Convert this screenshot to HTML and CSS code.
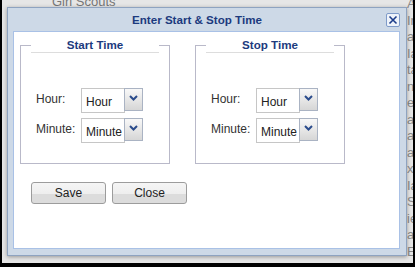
FILE: index.html
```html
<!DOCTYPE html>
<html lang="en">
<head>
    <meta charset="UTF-8">
    <meta name="viewport" content="width=device-width, initial-scale=1.0">
    <title>Enter Start &amp; Stop Time</title>
    <link rel="stylesheet" href="styles.css">
</head>
<body>
    <div class="screen">
        <div class="backdrop">
            <div class="bg-heading">Girl Scouts</div>
            <ul class="bg-list">
                <li>Ac</li><li>Ir</li><li>a</li><li>Ia</li><li>ta</li><li>n</li><li>e</li><li>a</li>
                <li>a</li><li>a:</li><li>x</li><li>Ia</li><li>SL</li><li>ie</li><li>a</li><li>En</li>
            </ul>
        </div>

        <div class="dialog">
            <div class="dialog-titlebar">
                <span class="dialog-title">Enter Start &amp; Stop Time</span>
                <button type="button" class="dialog-close" aria-label="Close">
                    <svg width="12" height="12" viewBox="0 0 12 12"><path d="M2.5 2.5 L9.5 9.5 M9.5 2.5 L2.5 9.5" stroke="#1d3d8a" stroke-width="1.6" fill="none"/></svg>
                </button>
            </div>
            <div class="dialog-body">
                <div class="time-groups">
                    <fieldset class="time-group">
                        <legend>Start Time</legend>
                        <div class="time-row">
                            <label>Hour:</label>
                            <div class="select">
                                <span class="select-value">Hour</span>
                                <span class="select-arrow"><svg width="9" height="6" viewBox="0 0 9 6"><path d="M1 1 L4.5 4.5 L8 1" stroke="#2b4c8c" stroke-width="2" fill="none"/></svg></span>
                            </div>
                        </div>
                        <div class="time-row">
                            <label>Minute:</label>
                            <div class="select">
                                <span class="select-value">Minute</span>
                                <span class="select-arrow"><svg width="9" height="6" viewBox="0 0 9 6"><path d="M1 1 L4.5 4.5 L8 1" stroke="#2b4c8c" stroke-width="2" fill="none"/></svg></span>
                            </div>
                        </div>
                    </fieldset>
                    <fieldset class="time-group">
                        <legend>Stop Time</legend>
                        <div class="time-row">
                            <label>Hour:</label>
                            <div class="select">
                                <span class="select-value">Hour</span>
                                <span class="select-arrow"><svg width="9" height="6" viewBox="0 0 9 6"><path d="M1 1 L4.5 4.5 L8 1" stroke="#2b4c8c" stroke-width="2" fill="none"/></svg></span>
                            </div>
                        </div>
                        <div class="time-row">
                            <label>Minute:</label>
                            <div class="select">
                                <span class="select-value">Minute</span>
                                <span class="select-arrow"><svg width="9" height="6" viewBox="0 0 9 6"><path d="M1 1 L4.5 4.5 L8 1" stroke="#2b4c8c" stroke-width="2" fill="none"/></svg></span>
                            </div>
                        </div>
                    </fieldset>
                </div>
                <div class="actions">
                    <button type="button" class="btn">Save</button>
                    <button type="button" class="btn">Close</button>
                </div>
            </div>
        </div>
    </div>
</body>
</html>
```

FILE: styles.css
```css
body {
    margin: 0;
    padding: 0;
    background-color: #000000;
    font-family: "Liberation Sans", Arial, sans-serif;
    font-size: 12px;
}

.screen {
    position: relative;
    width: 411px;
    height: 263px;
    margin-left: 2px;
    background-color: #e6e6e6;
    overflow: hidden;
}

/* page behind the modal */
.backdrop {
    display: flex;
    justify-content: space-between;
    color: #8a8a8a;
    font-size: 13px;
}

.bg-heading {
    margin-top: -6px;
    padding-left: 50px;
    color: #777777;
}

.bg-list {
    list-style: none;
    margin: -4px 0 0 0;
    padding: 0;
    width: 6px;
    overflow: hidden;
    white-space: nowrap;
    line-height: 16.5px;
}

/* modal */
.dialog {
    position: absolute;
    left: 5px;
    top: 7px;
    width: 400px;
    height: 249px;
    box-sizing: border-box;
    border: 1px solid #8ea3c0;
    background-color: #cdd9e7;
    box-shadow: 0 1px 4px rgba(0, 0, 0, 0.35);
}

.dialog-titlebar {
    display: flex;
    align-items: center;
    height: 23px;
}

.dialog-title {
    flex: 1;
    text-align: center;
    font-weight: bold;
    font-size: 11.6px;
    color: #1c3a7e;
}

.dialog-close {
    display: flex;
    align-items: center;
    justify-content: center;
    width: 14px;
    height: 14px;
    margin-right: 6px;
    padding: 0;
    border: 1px solid #7f9bc9;
    border-radius: 2px;
    background-color: #eef3fa;
}

.dialog-body {
    height: 218px;
    box-sizing: border-box;
    margin: 0 6px 0 5px;
    padding: 6px 0 0 6px;
    border: 1px solid #a9c1e6;
    background-color: #ffffff;
}

.time-groups {
    display: flex;
    gap: 25px;
}

.time-group {
    width: 150px;
    box-sizing: border-box;
    margin: 0;
    padding: 0 10px 20px 10px;
    border: 1px solid #b9b9c9;
}

.time-group legend {
    width: 128px;
    box-sizing: border-box;
    padding: 0;
    line-height: 14px;
    text-align: center;
    font-weight: bold;
    font-size: 11.6px;
    color: #1c3a7e;
    border-bottom: 1px solid #dddddd;
}

.time-row {
    display: flex;
    align-items: flex-start;
    padding-left: 5px;
    margin-top: 5px;
}

.time-row:first-of-type {
    margin-top: 35px;
}

.time-row label {
    width: 45px;
    padding-top: 4px;
    line-height: 14px;
    color: #333333;
}

.select {
    display: flex;
    align-items: flex-start;
}

.select-value {
    width: 44px;
    height: 25px;
    box-sizing: border-box;
    padding: 6px 0 0 4px;
    line-height: 14px;
    border: 1px solid #c6c6c6;
    color: #222222;
    overflow: hidden;
    white-space: nowrap;
}

.select-arrow {
    display: flex;
    justify-content: center;
    padding-top: 6px;
    width: 19px;
    height: 23px;
    box-sizing: border-box;
    margin-left: -1px;
    border: 1px solid #aab3c3;
    background: linear-gradient(#f8f8f8, #d6d6d6);
}

.actions {
    display: flex;
    gap: 6px;
    margin-top: 18px;
    padding-left: 11px;
}

.btn {
    width: 75px;
    height: 22px;
    padding: 0;
    border: 1px solid #9c9c9c;
    border-radius: 3px;
    background: linear-gradient(#f5f5f5 0, #eeeeee 55%, #dcdcdc 56%, #dcdcdc 100%);
    font-family: "Liberation Sans", Arial, sans-serif;
    font-size: 12px;
    color: #222222;
}
```
